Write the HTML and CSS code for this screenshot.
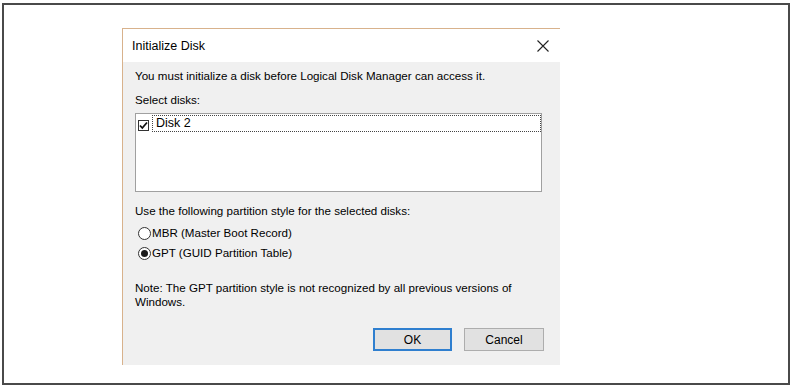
FILE: index.html
```html
<!DOCTYPE html>
<html>
<head>
<meta charset="utf-8">
<link rel="stylesheet" href="styles.css">
</head>
<body>
<div class="frame">
  <div class="dialog">
    <div class="titlebar">
      <span class="title">Initialize Disk</span>
      <svg class="close" width="12" height="12" viewBox="0 0 12 12"><path d="M0.5 0.5 L11.5 11.5 M11.5 0.5 L0.5 11.5" stroke="#222" stroke-width="1.1" fill="none"/></svg>
    </div>
    <div class="content">
      <p class="line msg">You must initialize a disk before Logical Disk Manager can access it.</p>
      <p class="line select">Select disks:</p>
      <div class="listbox">
        <div class="item">
          <span class="check"><svg width="9" height="9" viewBox="0 0 9 9"><path d="M1 4.5 L3.3 7 L8 1.5" stroke="#111" stroke-width="1.8" fill="none"/></svg></span>
          <span class="focus">Disk 2</span>
        </div>
      </div>
      <p class="line style">Use the following partition style for the selected disks:</p>
      <div class="radio first"><span class="dot"></span><span>MBR (Master Boot Record)</span></div>
      <div class="radio second"><span class="dot on"></span><span>GPT (GUID Partition Table)</span></div>
      <p class="note">Note: The GPT partition style is not recognized by all previous versions of Windows.</p>
      <div class="buttons">
        <button class="btn ok">OK</button>
        <button class="btn">Cancel</button>
      </div>
    </div>
  </div>
</div>
</body>
</html>
```

FILE: styles.css
```css
html, body {
  margin: 0;
  padding: 0;
  background: #ffffff;
}
body {
  font-family: "Liberation Sans", Arial, sans-serif;
  font-size: 11.6px;
  color: #000;
}
.frame {
  box-sizing: border-box;
  margin: 3px 0 0 2px;
  width: 788px;
  height: 382px;
  border: 2px solid #4a4a4a;
  padding: 23px 0 0 118px;
}
.dialog {
  box-sizing: border-box;
  width: 438px;
  height: 337px;
  border-top: 1px solid #d8b28c;
  border-left: 1px solid #d8b28c;
  background: #f0f0f0;
  display: flex;
  flex-direction: column;
}
.titlebar {
  height: 33px;
  background: #fff;
  display: flex;
  align-items: center;
  justify-content: space-between;
  padding: 0 11px 0 9px;
}
.title {
  font-size: 12.5px;
}
.close {
  display: block;
  margin-top: 1px;
}
.content {
  padding: 0 16px 0 12px;
  display: flex;
  flex-direction: column;
}
.line {
  margin: 0;
  height: 14px;
  line-height: 14px;
  white-space: nowrap;
}
.msg { margin-top: 7px; }
.select { margin-top: 10px; }
.listbox {
  box-sizing: border-box;
  margin-top: 6px;
  margin-right: 2px;
  height: 79px;
  background: #fff;
  border: 1px solid #a0a0a0;
  padding: 1px 0 0 1px;
}
.item {
  display: flex;
  align-items: flex-end;
  height: 17px;
}
.check {
  box-sizing: border-box;
  width: 11px;
  height: 11px;
  border: 1px solid #333;
  background: #fff;
  margin: 0 3px 1px 1px;
  display: flex;
  align-items: center;
  justify-content: center;
}
.check svg { display: block; }
.focus {
  box-sizing: border-box;
  flex: 1;
  height: 17px;
  border: 1px dotted #444;
  padding-left: 3px;
  line-height: 15px;
  font-size: 12.5px;
}
.style { margin-top: 12px; }
.radio {
  display: flex;
  align-items: center;
  height: 14px;
  line-height: 14px;
  padding-left: 3px;
}
.radio.first { margin-top: 8px; }
.radio.second { margin-top: 6px; }
.dot {
  box-sizing: border-box;
  width: 13px;
  height: 13px;
  border: 1px solid #333;
  border-radius: 50%;
  background: #fff;
  margin-right: 1px;
  display: flex;
  align-items: center;
  justify-content: center;
}
.dot.on::after {
  content: "";
  width: 7px;
  height: 7px;
  border-radius: 50%;
  background: #1a1a1a;
}
.note {
  margin: 21px 0 0 0;
  line-height: 14px;
  width: 400px;
}
.buttons {
  margin-top: 19px;
  display: flex;
  justify-content: flex-end;
  gap: 12px;
}
.btn {
  box-sizing: border-box;
  width: 80px;
  height: 23px;
  background: #e1e1e1;
  border: 1px solid #adadad;
  font-family: "Liberation Sans", Arial, sans-serif;
  font-size: 12px;
  color: #000;
  padding: 0;
}
.btn.ok {
  width: 79px;
  border: 2px solid #2f7fcf;
}
```
